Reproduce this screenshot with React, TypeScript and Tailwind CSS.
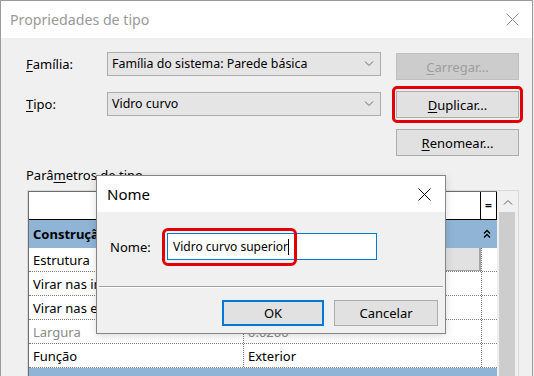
import React from 'react';

const Chevron = ({ up = false, className = '' }: { up?: boolean; className?: string }) => (
  <svg width="10" height="6" viewBox="0 0 10 6" className={className}>
    <polyline
      points={up ? '1,5.5 5,1.5 9,5.5' : '1,0.5 5,4.5 9,0.5'}
      fill="none"
      stroke="currentColor"
      strokeWidth="1"
    />
  </svg>
);

const CloseX = ({ className = '' }: { className?: string }) => (
  <svg width="13" height="13" viewBox="0 0 13 13" className={className}>
    <path d="M0.5 0.5 L12.5 12.5 M12.5 0.5 L0.5 12.5" stroke="currentColor" strokeWidth="1" />
  </svg>
);

const Combo = ({ value }: { value: string }) => (
  <div className="w-[274px] h-[24px] bg-[#e5e5e5] border border-[#acacac] flex items-center justify-between pl-[4px] pr-[6px]">
    <span className="text-[12.4px]">{value}</span>
    <Chevron className="text-[#6b6b6b]" />
  </div>
);

const Btn = ({ children, disabled = false }: { children: React.ReactNode; disabled?: boolean }) => (
  <div
    className={
      disabled
        ? 'w-[123px] h-[27px] bg-[#cccccc] border border-[#bfbfbf] text-[#9d9d9d] flex items-center justify-center'
        : 'w-[123px] h-[27px] bg-[#e1e1e1] border border-[#adadad] flex items-center justify-center'
    }
  >
    {children}
  </div>
);

const rows = [
  { name: 'Estrutura', value: '', button: true },
  { name: 'Virar nas inserções', value: '' },
  { name: 'Virar nas extremidades', value: '' },
  { name: 'Largura', value: '0.0200', muted: true },
  { name: 'Função', value: 'Exterior' },
];

export default function App() {
  return (
    <div className="w-[534px] h-[376px] overflow-hidden bg-[#f0f0f0] relative font-['Segoe_UI','Noto_Sans',sans-serif] text-[13px] leading-[18px] text-black">
      {/* Main window */}
      <div className="w-[533px] h-[376px] border-t border-l border-r border-[#9b9b9b] flex flex-col">
        <div className="h-[37px] shrink-0 bg-white flex items-center justify-between pl-[9px] pr-[13px]">
          <span className="text-[14.2px] text-[#999999]">Propriedades de tipo</span>
          <CloseX className="text-[#8c8c8c]" />
        </div>

        <div className="flex-1 pl-[25px]">
          <div className="flex">
            <div className="pt-[14px] flex flex-col gap-[16px]">
              <div className="flex items-center">
                <span className="w-[81px]">
                  <u className="underline-offset-[2px]">F</u>amília:
                </span>
                <Combo value="Família do sistema: Parede básica" />
              </div>
              <div className="flex items-center">
                <span className="w-[81px]">
                  <u className="underline-offset-[2px]">T</u>ipo:
                </span>
                <Combo value="Vidro curvo" />
              </div>
            </div>
            <div className="ml-[15px] pt-[15px] flex flex-col gap-[11px]">
              <Btn disabled>
                <span>
                  <u className="underline-offset-[2px]">C</u>arregar...
                </span>
              </Btn>
              <div className="relative">
                <Btn>
                  <span>
                    <u className="underline-offset-[2px]">D</u>uplicar...
                  </span>
                </Btn>
                <div className="absolute left-[-4px] top-[-5px] w-[131px] h-[37px] border-[3px] border-[#e30000] rounded-[5px]" />
              </div>
              <Btn>
                <span>
                  <u className="underline-offset-[2px]">R</u>enomear...
                </span>
              </Btn>
            </div>
          </div>

          <div className="mt-[10px] mb-[6px] h-[18px]">
            Parâ<u className="underline-offset-[2px]">m</u>etros de tipo
          </div>

          {/* Parameter table */}
          <div className="ml-[1px] w-[492px] h-[200px] border border-[#d9d9d9] flex">
            <div className="w-[469px] bg-white border-t border-l border-[#6d6d6d]">
              <div className="h-[28px] flex border-b border-black">
                <div className="w-[214px]" />
                <div className="w-[238px]" />
                <div className="w-[17px] border-l border-r border-black flex items-center justify-center text-[12px] font-bold">=</div>
              </div>
              <div className="h-[28px] w-[468px] bg-[#8fb4d6] flex items-center justify-between pl-[4px] pr-[6px]">
                <span className="font-bold">Construção</span>
                <svg width="8" height="10" viewBox="0 0 8 10">
                  <polyline points="1,4.5 4,1.5 7,4.5" fill="none" stroke="black" strokeWidth="1.3" />
                  <polyline points="1,8.5 4,5.5 7,8.5" fill="none" stroke="black" strokeWidth="1.3" />
                </svg>
              </div>
              {rows.map((r) => (
                <div key={r.name} className="h-[24px] w-[468px] flex border-b border-dotted border-[#7a7a7a]">
                  <div className={`w-[214px] pl-[4px] flex items-center ${r.muted ? 'text-[#8a8a8a]' : ''}`}>{r.name}</div>
                  <div className="w-[238px] border-l border-dotted border-[#7a7a7a] flex">
                    {r.button ? (
                      <div className="flex-1 bg-[#e1e1e1] border-r-2 border-b border-[#a3a3a3]" />
                    ) : (
                      <div className={`flex-1 pl-[4px] flex items-center ${r.muted ? 'text-[#8a8a8a]' : ''}`}>{r.value}</div>
                    )}
                  </div>
                  <div className="w-[16px] border-l border-dotted border-[#7a7a7a]" />
                </div>
              ))}
              <div className="h-[28px] w-[468px] bg-[#8fb4d6]" />
            </div>
            <div className="w-[21px] bg-[#f0f0f0] flex flex-col">
              <div className="h-[21px] flex items-center justify-center">
                <Chevron up className="text-[#606060]" />
              </div>
              <div className="ml-[2px] w-[16px] flex-1 bg-[#cdcdcd]" />
            </div>
          </div>
        </div>
      </div>

      {/* Nome dialog */}
      <div className="absolute left-[96px] top-[175px] w-[350px] h-[159px] border border-[#858585] bg-[#f0f0f0] flex flex-col shadow-[0_2px_8px_rgba(0,0,0,0.15)]">
        <div className="h-[36px] bg-white flex items-center justify-between pl-[10px] pr-[14px]">
          <span className="text-[15px]">Nome</span>
          <CloseX className="text-black" />
        </div>
        <div className="flex items-center pl-[13px] mt-[21px]">
          <span className="w-[57px]">Nome:</span>
          <div className="relative">
            <div className="w-[210px] h-[27px] bg-white border border-[#0078d7] flex items-center pl-[5px]">
              <span className="text-[12px]">Vidro curvo superior</span>
              <span className="inline-block w-px h-[16px] bg-black" />
            </div>
            <div className="absolute left-[-5px] top-[-5px] w-[135px] h-[38px] border-[3px] border-[#e30000] rounded-[6px]" />
          </div>
        </div>
        <div className="mx-[2px] mt-[26px] h-[2px] border-t border-[#a0a0a0] border-b border-b-white" />
        <div className="flex justify-end gap-[10px] pr-[7px] mt-[12px]">
          <div className="w-[102px] h-[26px] bg-[#e1e1e1] border-2 border-[#0078d7] flex items-center justify-center">OK</div>
          <div className="w-[104px] h-[26px] bg-[#e1e1e1] border border-[#adadad] flex items-center justify-center">Cancelar</div>
        </div>
      </div>
    </div>
  );
}
